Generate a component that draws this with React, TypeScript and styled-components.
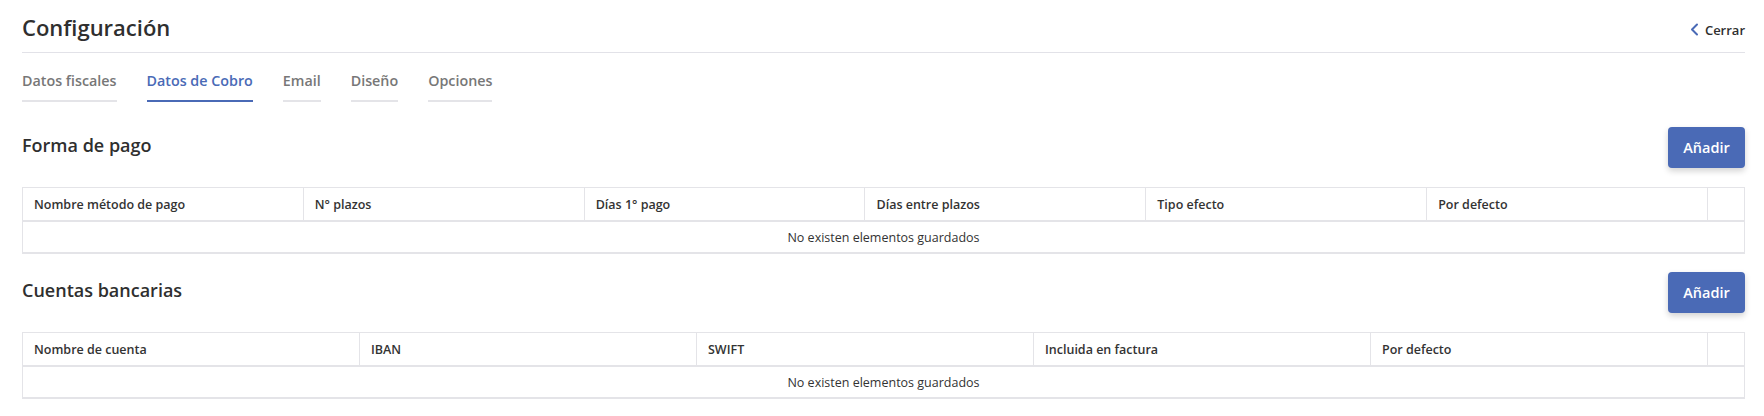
import React, { useState } from 'react';
import styled, { createGlobalStyle } from 'styled-components';

const GlobalStyle = createGlobalStyle`
  html, body {
    margin: 0;
    padding: 0;
    background: #ffffff;
    font-family: "Open Sans", "Noto Sans", sans-serif;
    color: #333333;
  }
`;

const tabs = ['Datos fiscales', 'Datos de Cobro', 'Email', 'Diseño', 'Opciones'];

const paymentColumns = ['Nombre método de pago', 'N° plazos', 'Días 1° pago', 'Días entre plazos', 'Tipo efecto', 'Por defecto'];
const accountColumns = ['Nombre de cuenta', 'IBAN', 'SWIFT', 'Incluida en factura', 'Por defecto'];

function Section({ title, columns }: { title: string; columns: string[] }) {
  return (
    <SectionBox>
      <SectionHead>
        <SectionTitle>{title}</SectionTitle>
        <AddButton>Añadir</AddButton>
      </SectionHead>
      <Table>
        <colgroup>
          {columns.map((c) => (
            <col key={c} />
          ))}
          <col style={{ width: 37 }} />
        </colgroup>
        <thead>
          <tr>
            {columns.map((c) => (
              <Th key={c}>{c}</Th>
            ))}
            <Th />
          </tr>
        </thead>
        <tbody>
          <tr>
            <EmptyCell colSpan={columns.length + 1}>No existen elementos guardados</EmptyCell>
          </tr>
        </tbody>
      </Table>
    </SectionBox>
  );
}

export default function App() {
  const [active, setActive] = useState(1);

  return (
    <Page>
      <GlobalStyle />
      <TopBar>
        <PageTitle>Configuración</PageTitle>
        <CloseLink>
          <svg width="9" height="13" viewBox="0 0 9 13" fill="none">
            <path d="M7 1.5L2 6.5L7 11.5" stroke="#4a6ab6" strokeWidth="2" strokeLinecap="round" strokeLinejoin="round" />
          </svg>
          Cerrar
        </CloseLink>
      </TopBar>
      <TabBar>
        {tabs.map((t, i) => (
          <Tab key={t} $active={i === active} onClick={() => setActive(i)}>
            {t}
          </Tab>
        ))}
      </TabBar>
      <Section title="Forma de pago" columns={paymentColumns} />
      <Section title="Cuentas bancarias" columns={accountColumns} />
    </Page>
  );
}

const Page = styled.div`
  padding: 12px 19px 19px 22px;
`;

const TopBar = styled.div`
  display: flex;
  align-items: center;
  justify-content: space-between;
  padding-bottom: 10px;
  border-bottom: 1px solid #e2e2e8;
`;

const PageTitle = styled.h1`
  margin: 0;
  font-size: 22px;
  line-height: 30px;
  font-weight: 600;
  color: #2f2f2f;
`;

const CloseLink = styled.a`
  display: flex;
  align-items: center;
  gap: 6px;
  font-size: 13px;
  font-weight: 600;
  color: #2f2f2f;
  cursor: pointer;
  margin-top: 5px;
`;

const TabBar = styled.div`
  display: flex;
  gap: 30px;
  margin-top: 18px;
`;

const Tab = styled.div<{ $active: boolean }>`
  font-size: 14.3px;
  line-height: 20px;
  font-weight: 600;
  padding-bottom: 9px;
  color: ${(p) => (p.$active ? '#4a6ab6' : '#777777')};
  border-bottom: 2px solid ${(p) => (p.$active ? '#4a6ab6' : '#e4e4e8')};
  cursor: pointer;
`;

const SectionBox = styled.div`
  margin-top: 25px;

  & + & {
    margin-top: 18px;
  }
`;

const SectionHead = styled.div`
  display: flex;
  align-items: center;
  justify-content: space-between;
  margin-bottom: 19px;
`;

const SectionTitle = styled.h2`
  margin: 0 0 6px;
  font-size: 18px;
  font-weight: 600;
  color: #2f2f2f;
`;

const AddButton = styled.button`
  width: 77px;
  height: 41px;
  border: none;
  border-radius: 4px;
  background: #4a6ab6;
  color: #ffffff;
  font-family: "Open Sans", "Noto Sans", sans-serif;
  font-size: 14.5px;
  font-weight: 600;
  box-shadow: 0 3px 6px rgba(0, 0, 0, 0.18);
  cursor: pointer;
`;

const Table = styled.table`
  width: 100%;
  border-collapse: collapse;
  table-layout: fixed;
  border: 1px solid #e4e4e8;
`;

const Th = styled.th`
  height: 32px;
  padding: 0 11px;
  text-align: left;
  font-size: 12.5px;
  font-weight: 600;
  color: #333333;
  border-right: 1px solid #e4e4e8;
  border-bottom: 2px solid #e4e4e8;
`;

const EmptyCell = styled.td`
  height: 28px;
  text-align: center;
  font-size: 12.5px;
  color: #333333;
  border-bottom: 2px solid #e4e4e8;
`;
